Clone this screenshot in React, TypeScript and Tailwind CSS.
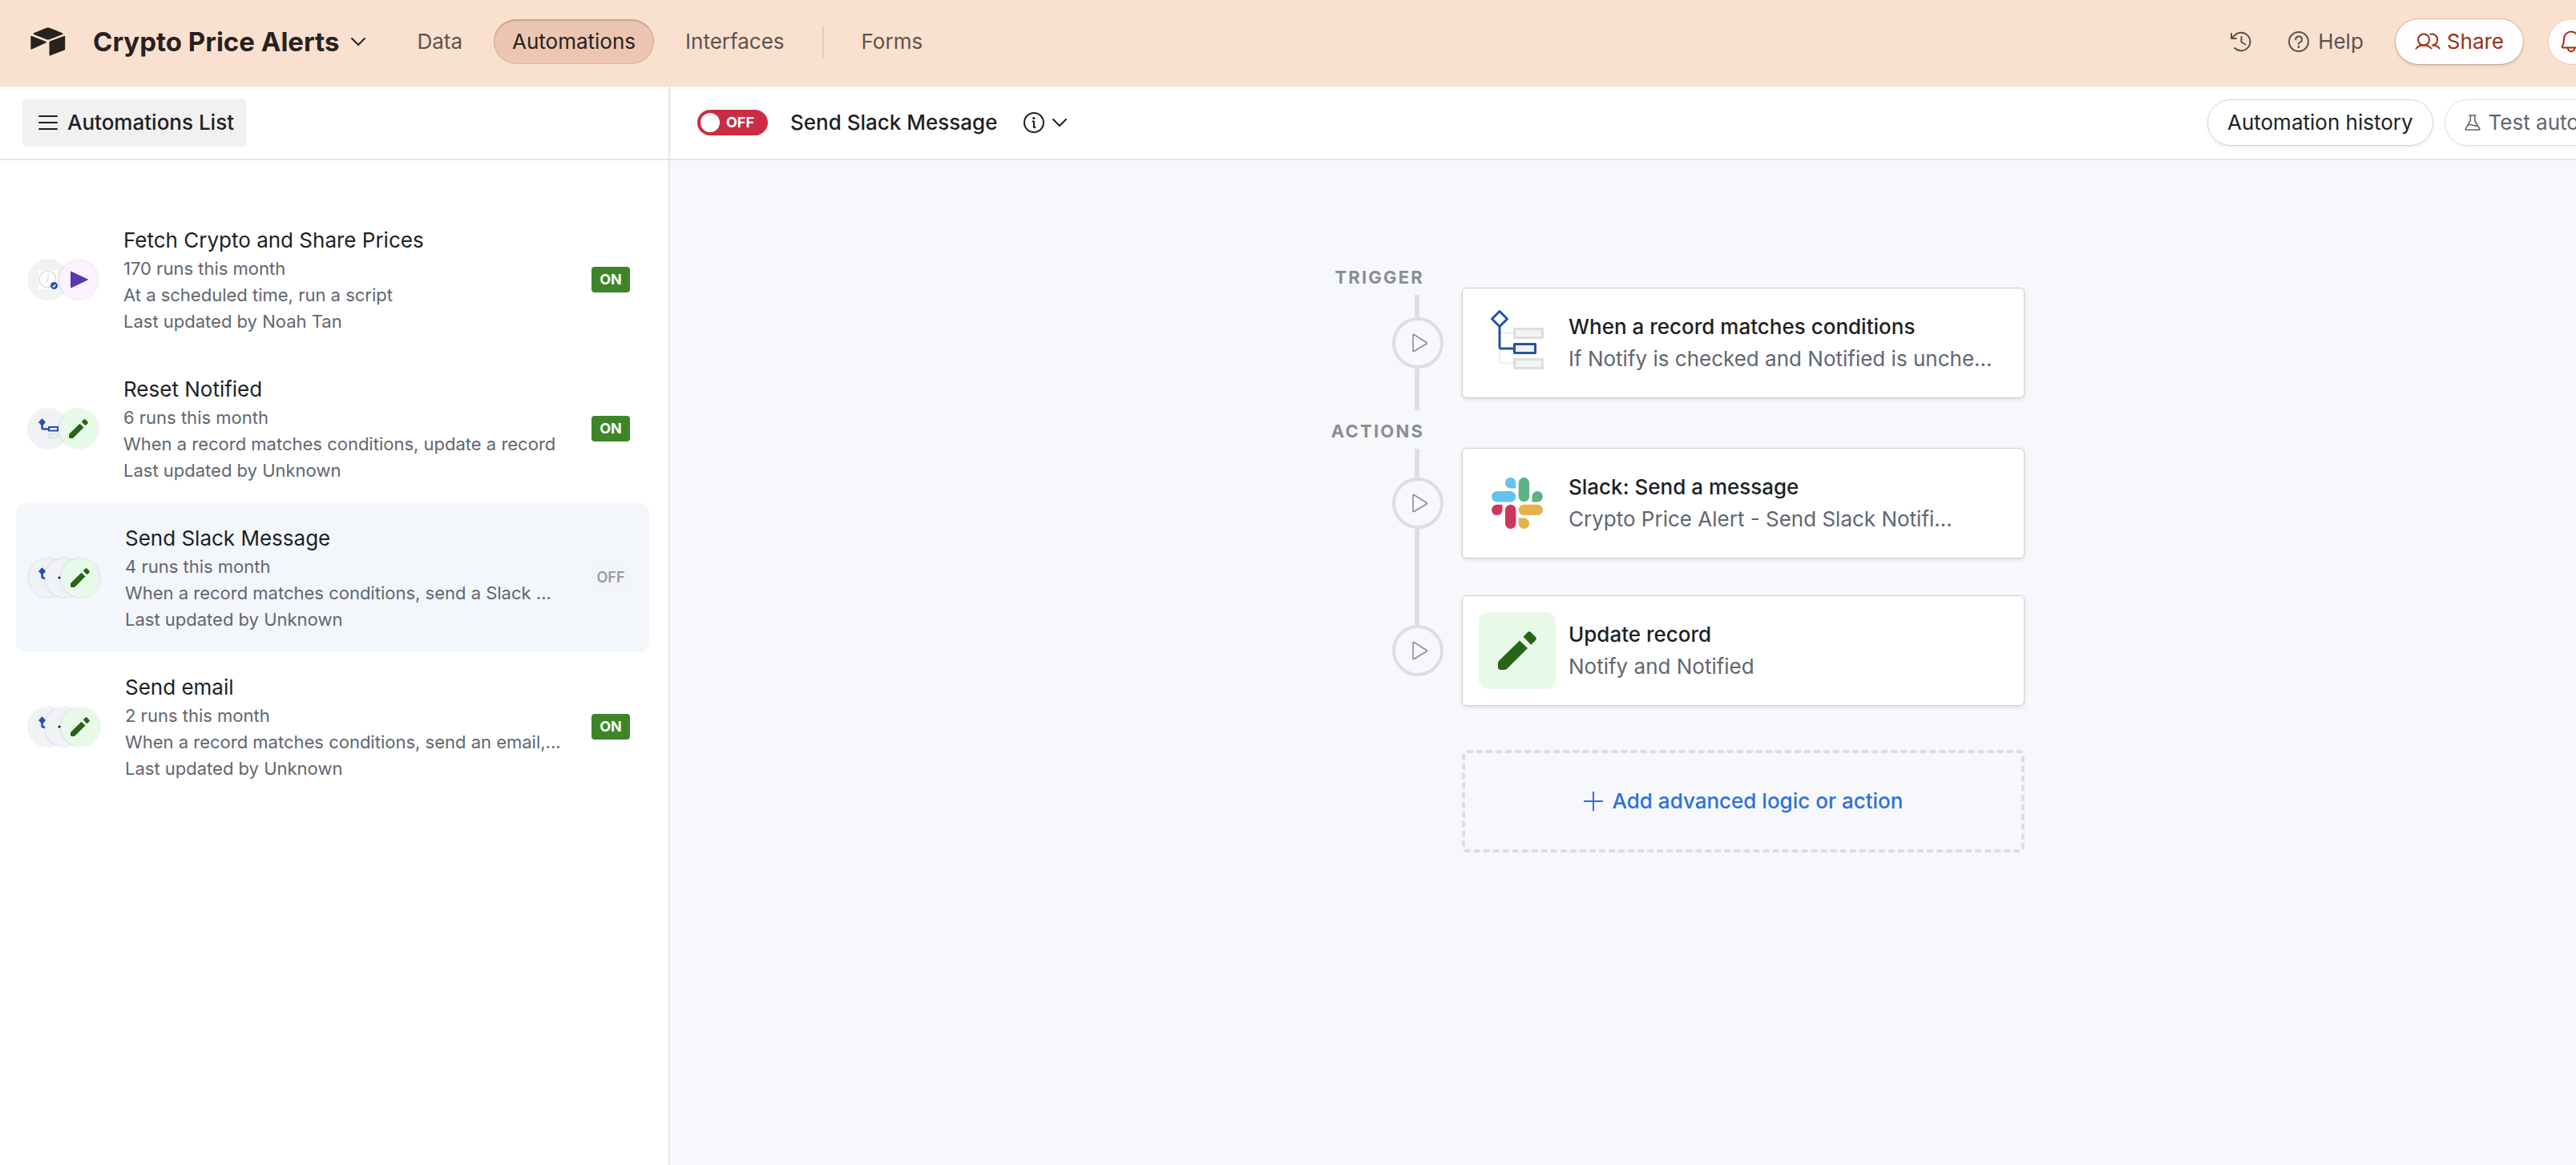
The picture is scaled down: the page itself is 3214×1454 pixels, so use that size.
import type { ReactNode } from 'react';

function Logo() {
  return (
    <svg width="44" height="36" viewBox="0 0 44 36" fill="#26221e" aria-hidden="true">
      <path d="M20 .8 4.200 7.200c-1 .4-1 1.300 0 1.700l16 6.300c1.200.5 2.400.5 3.600 0l16-6.300c1-.4 1-1.300 0-1.700L24 .8a5.500 5.500 0 0 0-4 0z" />
      <path d="M23.500 18.600v15.800c0 .7.700 1.200 1.400.9l17.600-6.800c.5-.2.700-.6.700-1V11.800c0-.7-.7-1.200-1.400-.9l-17.700 6.700c-.4.200-.6.600-.6 1z" />
      <path d="M19.200 19.400 1.600 27.500c-.6.300-1.300-.1-1.300-.8V11.900c0-.8.800-1.300 1.600-1l17.200 6.800c.8.300.8 1.300.1 1.700z" />
    </svg>
  );
}

function ChevronDown() {
  return (
    <svg width="20" height="12" viewBox="0 0 20 12" fill="none" stroke="currentColor" strokeWidth="2" strokeLinecap="round" strokeLinejoin="round" aria-hidden="true">
      <path d="M2 2l8 8 8-8" />
    </svg>
  );
}

function HistoryIcon() {
  return (
    <svg width="28" height="28" viewBox="0 0 28 28" fill="none" stroke="currentColor" strokeWidth="2" strokeLinecap="round" strokeLinejoin="round" aria-hidden="true">
      <path d="M2 4v6h6" />
      <path d="M2.500 9.500 6 6.200a11.300 11.300 0 1 1 .2 15.800" />
      <path d="M14.500 8v6.500l5 3" />
    </svg>
  );
}

function HelpIcon() {
  return (
    <svg width="28" height="28" viewBox="0 0 28 28" fill="none" stroke="currentColor" strokeWidth="2" strokeLinecap="round" strokeLinejoin="round" aria-hidden="true">
      <circle cx="14" cy="14" r="12" />
      <path d="M10.200 11.300a3.900 3.900 0 1 1 5.300 3.600c-1 .4-1.500 1-1.500 1.900v.3" />
      <circle cx="14" cy="20.500" r="1.500" fill="currentColor" stroke="none" />
    </svg>
  );
}

function InfoIcon() {
  return (
    <svg width="28" height="28" viewBox="0 0 28 28" fill="none" stroke="currentColor" strokeWidth="2" strokeLinecap="round" strokeLinejoin="round" aria-hidden="true">
      <circle cx="14" cy="14" r="12" />
      <path d="M12.500 12.500H14V20h1.500" />
      <circle cx="13.800" cy="8.500" r="1.600" fill="currentColor" stroke="none" />
    </svg>
  );
}

function PeopleIcon() {
  return (
    <svg width="32" height="24" viewBox="0 0 32 24" fill="none" stroke="currentColor" strokeWidth="2" strokeLinecap="round" strokeLinejoin="round" aria-hidden="true">
      <circle cx="11" cy="9.500" r="7" />
      <path d="M1.500 20.500c2-2.600 5.500-4 9.500-4s7.500 1.400 9.500 4" />
      <path d="M19 2.900a7 7 0 1 1 3 13.600c3.500 0 6.800 1.400 8.600 4" />
    </svg>
  );
}

function BellIcon() {
  return (
    <svg width="28" height="30" viewBox="0 0 28 30" fill="none" stroke="currentColor" strokeWidth="2" strokeLinecap="round" strokeLinejoin="round" aria-hidden="true">
      <path d="M14 2.500c-5 0-9 4-9 9 0 4.500-1 7.500-2.200 9.500-.4.800 0 1.500.8 1.500h20.800c.8 0 1.200-.7.8-1.500C24 19 23 16 23 11.500c0-5-4-9-9-9z" />
      <path d="M9.800 22.500a4.200 4.700 0 0 0 8.400 0" />
    </svg>
  );
}

function FlaskIcon() {
  return (
    <svg width="20" height="22" viewBox="0 0 20 22" fill="none" stroke="currentColor" strokeWidth="1.600" strokeLinecap="round" strokeLinejoin="round" aria-hidden="true">
      <path d="M6 2h8M7.300 2v6.500L1.300 18.600c-.4.700 0 1.400.8 1.400h15.800c.8 0 1.200-.7.800-1.400l-6-10.100V2" />
      <path d="M4.500 14c2-1 3.800-.6 5.500.2s3.500 1 5.800.2" />
    </svg>
  );
}

function Pencil({ size }: { size: number }) {
  return (
    <svg width={size} height={size} viewBox="0 0 48 48" fill="#2a6417" aria-hidden="true">
      <path d="M27 11.500 37 21 11.500 46.600C10.600 47.500 9.600 48 8.300 48H3c-1.700 0-3-1.300-3-3v-5.300c0-1.300.5-2.300 1.400-3.200z" />
      <path d="M31.500 6.800 36.500 1.500c1.600-1.800 3.300-1.800 5 0l5 5c1.800 1.700 1.800 3.400 0 5l-5.200 5.200z" />
    </svg>
  );
}

function Circle({ className, children }: { className: string; children: ReactNode }) {
  return (
    <span className={`flex size-13 shrink-0 items-center justify-center rounded-full border-2 border-[#20263a]/6 bg-clip-padding ${className}`}>
      {children}
    </span>
  );
}

function MiniConditions() {
  return (
    <svg width="48" height="48" viewBox="2 2 48 48" fill="none" aria-hidden="true">
      <rect x="27" y="33" width="11" height="4.500" stroke="#dddee1" strokeWidth="1.500" />
      <path d="M18.500 18v6.500q0 2 2 2H26" stroke="#254fae" strokeWidth="2.600" />
      <path d="M18.500 13.700 22.500 18l-4 4.300L14.500 18z" fill="#254fae" stroke="#254fae" strokeLinejoin="round" />
      <rect x="27" y="24" width="11" height="4.500" stroke="#254fae" strokeWidth="2" fill="#fff" />
    </svg>
  );
}

function MiniClock() {
  return (
    <svg width="24" height="24" viewBox="0 0 24 24" fill="none" aria-hidden="true">
      <rect width="24" height="24" fill="#fff" />
      <circle cx="11.300" cy="11.500" r="10.300" stroke="#e3e3e4" strokeWidth="1.800" />
      <path d="M12 5.500V12l-3 3" stroke="#d9d9db" strokeWidth="1.200" />
      <circle cx="19.500" cy="19.500" r="4.500" fill="#254fae" />
      <path d="M17.600 19.700l1.400 1.300 2.500-2.700" stroke="#fff" strokeWidth="1.300" />
    </svg>
  );
}

function PairIcons({ first, second, tint }: { first: ReactNode; second: ReactNode; tint: string }) {
  return (
    <span className="flex -space-x-3.5">
      <Circle className="bg-[#f1f2f6]">{first}</Circle>
      <Circle className={tint}>{second}</Circle>
    </span>
  );
}

function TripleIcons() {
  return (
    <span className="flex -space-x-8">
      <Circle className="bg-[#f1f2f6]"><MiniConditions /></Circle>
      <Circle className="bg-[#f1f2f6]">
        <svg width="16" height="4" viewBox="0 0 16 4" aria-hidden="true"><circle cx="2" cy="2" r="1.600" fill="#1d1f25" /></svg>
      </Circle>
      <Circle className="bg-[#e7fae7]"><Pencil size={24} /></Circle>
    </span>
  );
}

const automations = [
  {
    name: 'Fetch Crypto and Share Prices',
    runs: '170 runs this month',
    summary: 'At a scheduled time, run a script',
    updated: 'Last updated by Noah Tan',
    on: true,
    icons: (
      <PairIcons
        tint="bg-[#faf2fe]"
        first={<MiniClock />}
        second={<svg width="24" height="24" viewBox="0 0 24 24" aria-hidden="true"><path d="M2.500 2v20L23.500 12z" fill="#5b37ab" stroke="#5b37ab" strokeLinejoin="round" /></svg>}
      />
    ),
  },
  {
    name: 'Reset Notified',
    runs: '6 runs this month',
    summary: 'When a record matches conditions, update a record',
    updated: 'Last updated by Unknown',
    on: true,
    icons: <PairIcons tint="bg-[#e7fae7]" first={<MiniConditions />} second={<Pencil size={24} />} />,
  },
  {
    name: 'Send Slack Message',
    runs: '4 runs this month',
    summary: 'When a record matches conditions, send a Slack ...',
    updated: 'Last updated by Unknown',
    on: false,
    selected: true,
    icons: <TripleIcons />,
  },
  {
    name: 'Send email',
    runs: '2 runs this month',
    summary: 'When a record matches conditions, send an email,...',
    updated: 'Last updated by Unknown',
    on: true,
    icons: <TripleIcons />,
  },
];

function ConditionsIcon() {
  return (
    <svg width="96" height="96" viewBox="0 0 96 96" fill="none" className="shrink-0" aria-hidden="true">
      <path d="M28 35.500h15M26 56v14q0 3 3 3h14" stroke="#f1f2f5" strokeWidth="3" />
      <rect x="44.500" y="30.500" width="35" height="11" stroke="#dddee1" strokeWidth="3" fill="#f2f3f7" strokeLinejoin="round" />
      <rect x="44.500" y="68.500" width="35" height="11" stroke="#dddee1" strokeWidth="3" fill="#f2f3f7" strokeLinejoin="round" />
      <path d="M26 28v25q0 2 2 2h16" stroke="#2452ac" strokeWidth="3" />
      <path d="M26 8.500 35.500 18 26 27.500 16.500 18z" stroke="#2452ac" strokeWidth="3" strokeLinejoin="round" />
      <rect x="44.500" y="49.500" width="26" height="11" stroke="#2452ac" strokeWidth="3" fill="#f2f3f9" strokeLinejoin="round" />
    </svg>
  );
}

function SlackIcon() {
  return (
    <svg width="96" height="96" viewBox="-16 -16 96 96" className="shrink-0" aria-hidden="true">
      <g fill="#63c3ee">
        <path d="M23.600 0a6.700 6.700 0 0 0 0 13.400h6.700V6.700A6.700 6.700 0 0 0 23.600 0z" />
        <rect y="17" width="30.300" height="13.400" rx="6.700" />
      </g>
      <g fill="#5cb382">
        <rect x="33.700" width="13.400" height="30.300" rx="6.700" />
        <path d="M50.500 30.400v-6.700a6.700 6.700 0 1 1 6.700 6.700z" />
      </g>
      <g fill="#e4b34c">
        <rect x="33.700" y="33.700" width="30.300" height="13.400" rx="6.700" />
        <path d="M33.700 50.500h6.700a6.700 6.700 0 1 1-6.700 6.700z" />
      </g>
      <g fill="#cd375c">
        <rect x="17" y="33.700" width="13.400" height="30.300" rx="6.700" />
        <path d="M13.500 33.700v6.700a6.700 6.700 0 1 1-6.700-6.700z" />
      </g>
    </svg>
  );
}

function StepCard({ icon, title, detail, className }: { icon: ReactNode; title: string; detail: string; className: string }) {
  return (
    <button
      type="button"
      className={`flex h-[138px] w-full items-center gap-4 rounded-md border border-[#cdcfd3] bg-white pr-8 pl-5 text-left text-[26px] leading-10 shadow-[0_2px_5px_rgba(0,0,0,0.10)] ${className}`}
    >
      {icon}
      <span className="flex min-w-0 flex-col">
        <span className="truncate font-medium text-[#1d1f25]">{title}</span>
        <span className="truncate text-[#616670]">{detail}</span>
      </span>
    </button>
  );
}

function RunStep({ label }: { label: string }) {
  return (
    <button type="button" aria-label={label} className="size-16 rounded-full border-4 border-[#dddee1]">
      <svg width="56" height="56" viewBox="4 4 56 56" fill="none" stroke="#8b8f99" strokeWidth="1.600" strokeLinejoin="round" aria-hidden="true">
        <path d="M26 22v20q0 1 1 .5l16-9.500q1-.8 0-1.500L27 21.500q-1-.5-1 .5z" />
      </svg>
    </button>
  );
}

function Line({ className }: { className: string }) {
  return <span className={`mr-[30px] w-1.5 bg-[#dddee1] ${className}`} />;
}

const tab = 'flex h-14 items-center rounded-full px-[23px]';

export default function App() {
  return (
    <div className="flex min-h-screen flex-col overflow-hidden bg-white font-[Inter,'Liberation_Sans',sans-serif] text-[26px] leading-8 text-[#1d1f25]">
      <header className="flex h-27 shrink-0 items-center justify-between bg-[#fae0cf] pb-1 text-[#5c534c]">
        <div className="flex items-center">
          <a href="#home" aria-label="Home" className="ml-[38px] shrink-0"><Logo /></a>
          <button type="button" className="ml-[34px] flex items-center gap-3.5 text-[#26221e]">
            <span className="text-[33px] leading-10 font-bold">Crypto Price Alerts</span>
            <ChevronDown />
          </button>
          <nav className="ml-10 flex items-center gap-4">
            <a href="#data" className={tab}>Data</a>
            <a href="#automations" aria-current="page" className={`${tab} bg-[#ecc6b3] text-[#26221e] shadow-[inset_0_0_0_1px_rgba(150,90,60,0.2),inset_0_2px_2px_rgba(90,50,30,0.18)]`}>Automations</a>
            <a href="#interfaces" className={tab}>Interfaces</a>
            <span className="mx-2 h-10 w-0.5 bg-[#e9cbb9]" />
            <a href="#forms" className={tab}>Forms</a>
          </nav>
        </div>
        <div className="-mr-[22px] flex shrink-0 items-center">
          <button type="button" aria-label="History"><HistoryIcon /></button>
          <button type="button" className="ml-11 flex items-center gap-2.5"><HelpIcon />Help</button>
          <button type="button" className="ml-10 flex h-14 items-center gap-2 rounded-full bg-[#fffdfd] px-6 text-[#9e3011] shadow-[0_0_0_1px_rgba(90,60,40,0.2),0_2px_4px_rgba(0,0,0,0.14)]"><PeopleIcon />Share</button>
          <button type="button" aria-label="Notifications" className="ml-8 flex size-14 items-center justify-center rounded-full bg-[#fffdfd] text-[#9e3011] shadow-[0_0_0_1px_rgba(90,60,40,0.12)]"><BellIcon /></button>
        </div>
      </header>

      <div className="flex grow">
        <aside className="flex w-[836px] shrink-0 flex-col border-r-2 border-[#e4e4e6]">
          <div className="flex h-23 items-center border-b-2 border-[#e4e4e6] pl-7">
            <button type="button" className="flex h-15 items-center gap-3 rounded-md bg-[#f1f1f1] px-5 pr-4 font-medium">
              <svg width="24" height="20" viewBox="0 0 24 20" stroke="currentColor" strokeWidth="2" strokeLinecap="round" aria-hidden="true"><path d="M1 2h22M1 10h22M1 18h22" /></svg>
              Automations List
            </button>
          </div>
          <ul className="pt-14 pr-6 pl-5">
            {automations.map((a) => (
              <li key={a.name}>
                <button type="button" className={`flex w-full items-center rounded-xl py-6 pr-6 pl-3.5 text-left ${a.selected ? 'bg-[#f3f7fc]' : ''}`}>
                  {a.icons}
                  <span className="ml-[30px] flex min-w-0 grow flex-col text-[22px] leading-[33px] text-[#616670]">
                    <span className="text-[26px] leading-[39px] text-[#1d1f25]">{a.name}</span>
                    <span>{a.runs}</span>
                    <span className="whitespace-nowrap">{a.summary}</span>
                    <span>{a.updated}</span>
                  </span>
                  <span className={`flex h-8 w-12 shrink-0 items-center justify-center rounded-sm text-[18px] leading-6 ${a.on ? 'bg-[#3e8529] font-bold text-white' : 'bg-[#f2f4f7] font-semibold text-[#989aa0]'}`}>
                    {a.on ? 'ON' : 'OFF'}
                  </span>
                </button>
              </li>
            ))}
          </ul>
        </aside>

        <main className="flex min-w-0 grow flex-col">
          <div className="flex h-23 items-center justify-between border-b-2 border-[#e4e4e6] pl-[34px]">
            <div className="flex items-center">
              <button type="button" role="switch" aria-checked="false" aria-label="Automation enabled" className="flex h-8 w-22 items-center gap-2 rounded-full bg-[#ca2d43] px-1 text-[18px] font-bold text-white">
                <span className="size-6 rounded-full bg-white" />
                OFF
              </button>
              <h1 className="ml-7 font-medium">Send Slack Message</h1>
              <button type="button" aria-label="Automation details" className="ml-8 flex items-center gap-2">
                <InfoIcon />
                <ChevronDown />
              </button>
            </div>
            <div className="-mr-28 flex shrink-0 items-center gap-3.5">
              <button type="button" className="h-[58px] rounded-full border border-[#d3d3d6] px-6 whitespace-nowrap shadow-[0_2px_4px_rgba(0,0,0,0.07)]">Automation history</button>
              <button type="button" className="flex h-[58px] items-center gap-2.5 rounded-full border border-[#dedee1] px-6 whitespace-nowrap text-[#616670] shadow-[0_2px_4px_rgba(0,0,0,0.04)]"><FlaskIcon />Test automation</button>
            </div>
          </div>

          <div className="grow bg-[#f7f8fc] pt-[124px]">
            <div className="mx-auto grid w-[1002px] grid-cols-[277px_702px] gap-x-[23px]">
              <div className="flex flex-col items-end">
                <h2 className="mr-6 flex h-11 items-center text-[22px] font-bold tracking-widest text-[#8a8d93]">TRIGGER</h2>
                <Line className="h-7" />
                <RunStep label="Run trigger" />
                <Line className="h-13" />
                <h2 className="mr-6 flex h-12 items-center pt-1 text-[22px] font-bold tracking-widest text-[#8a8d93]">ACTIONS</h2>
                <Line className="h-9" />
                <RunStep label="Run Slack action" />
                <Line className="h-30" />
                <RunStep label="Run update action" />
              </div>
              <div className="flex flex-col pt-[35px]">
                <StepCard className="mb-[62px]" icon={<ConditionsIcon />} title="When a record matches conditions" detail="If Notify is checked and Notified is unche..." />
                <StepCard className="mb-[46px]" icon={<SlackIcon />} title="Slack: Send a message" detail="Crypto Price Alert - Send Slack Notifi..." />
                <StepCard
                  className="mb-[55px]"
                  icon={<span className="flex size-24 shrink-0 items-center justify-center rounded-xl bg-[#e7fae7]"><Pencil size={48} /></span>}
                  title="Update record"
                  detail="Notify and Notified"
                />
                <button type="button" className="flex h-32 items-center justify-center gap-3 rounded-md border-4 border-dashed border-[#dddee1] font-medium text-[#2d70dd]">
                  <svg width="24" height="24" viewBox="0 0 24 24" stroke="currentColor" strokeWidth="2" aria-hidden="true"><path d="M12 0v24M0 12h24" /></svg>
                  Add advanced logic or action
                </button>
              </div>
            </div>
          </div>
        </main>
      </div>
    </div>
  );
}
